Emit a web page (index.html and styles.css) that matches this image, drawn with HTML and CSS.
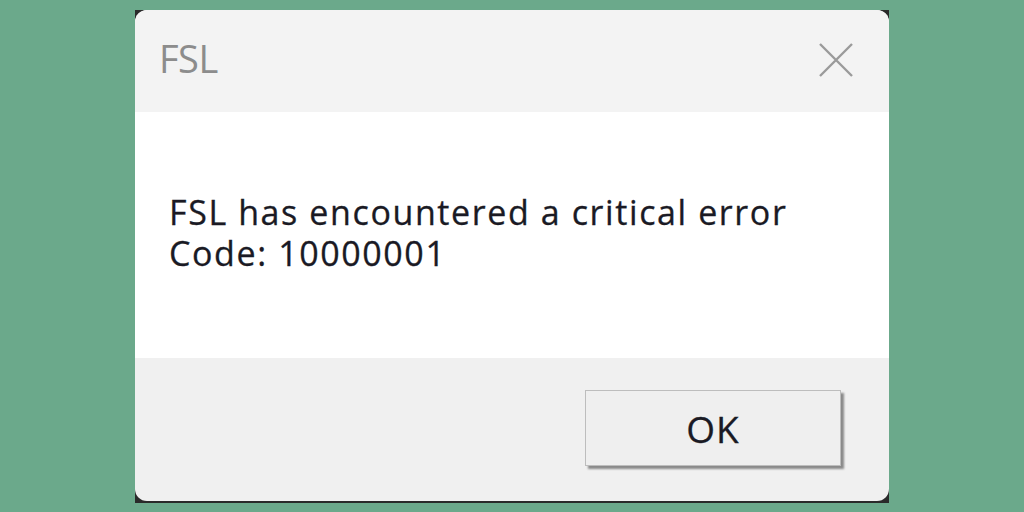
FILE: index.html
```html
<!DOCTYPE html>
<html>
<head>
<meta charset="utf-8">
<link rel="stylesheet" href="styles.css">
</head>
<body>
<div class="frame">
  <div class="dialog">
    <div class="titlebar">
      <span class="title">FSL</span>
      <svg class="close" width="36" height="36" viewBox="0 0 36 36"><path d="M2 2 L34 34 M34 2 L2 34" stroke="#9a9a9a" stroke-width="2.4" fill="none"/></svg>
    </div>
    <div class="content">
      <p class="msg">FSL has encountered a critical error<br>Code: 10000001</p>
    </div>
    <div class="footer">
      <button class="ok">OK</button>
    </div>
  </div>
</div>
</body>
</html>
```

FILE: styles.css
```css
html, body {
  margin: 0;
  padding: 0;
}
body {
  width: 1024px;
  height: 512px;
  background: #6ba98b;
  display: flex;
  align-items: center;
  justify-content: center;
  font-family: "Open Sans", "Noto Sans", sans-serif;
}
.frame {
  width: 754px;
  height: 493px;
  background: #2a2a2a;
  margin-top: 1px;
}
.dialog {
  width: 754px;
  height: 491px;
  border-radius: 12px;
  overflow: hidden;
  display: flex;
  flex-direction: column;
  background: #f0f0f0;
}
.titlebar {
  height: 102px;
  background: #f3f3f3;
  display: flex;
  align-items: center;
  justify-content: space-between;
  padding: 0 35px 0 24px;
}
.title {
  font-size: 38px;
  color: #8c8c8c;
  letter-spacing: -0.5px;
  margin-bottom: 6px;
}
.close {
  display: block;
  margin-bottom: 2px;
}
.content {
  height: 246px;
  background: #ffffff;
  display: flex;
  align-items: center;
}
.msg {
  margin: 0 0 4px 34px;
  font-size: 34px;
  line-height: 41px;
  color: #1a1a24;
  letter-spacing: 1.6px;
  -webkit-text-stroke: 0.3px #1a1a24;
}
.footer {
  flex: 1;
  display: flex;
  justify-content: flex-end;
  align-items: flex-start;
  padding: 32px 48px 0 0;
}
.ok {
  width: 256px;
  height: 76px;
  background: #efefef;
  border: 1px solid #bdbdbd;
  box-shadow: 3px 3px 2px #8a8a8a;
  font-family: "Open Sans", "Noto Sans", sans-serif;
  font-size: 37px;
  letter-spacing: 1px;
  color: #1a1a24;
  -webkit-text-stroke: 0.3px #1a1a24;
  padding: 0;
}
```
